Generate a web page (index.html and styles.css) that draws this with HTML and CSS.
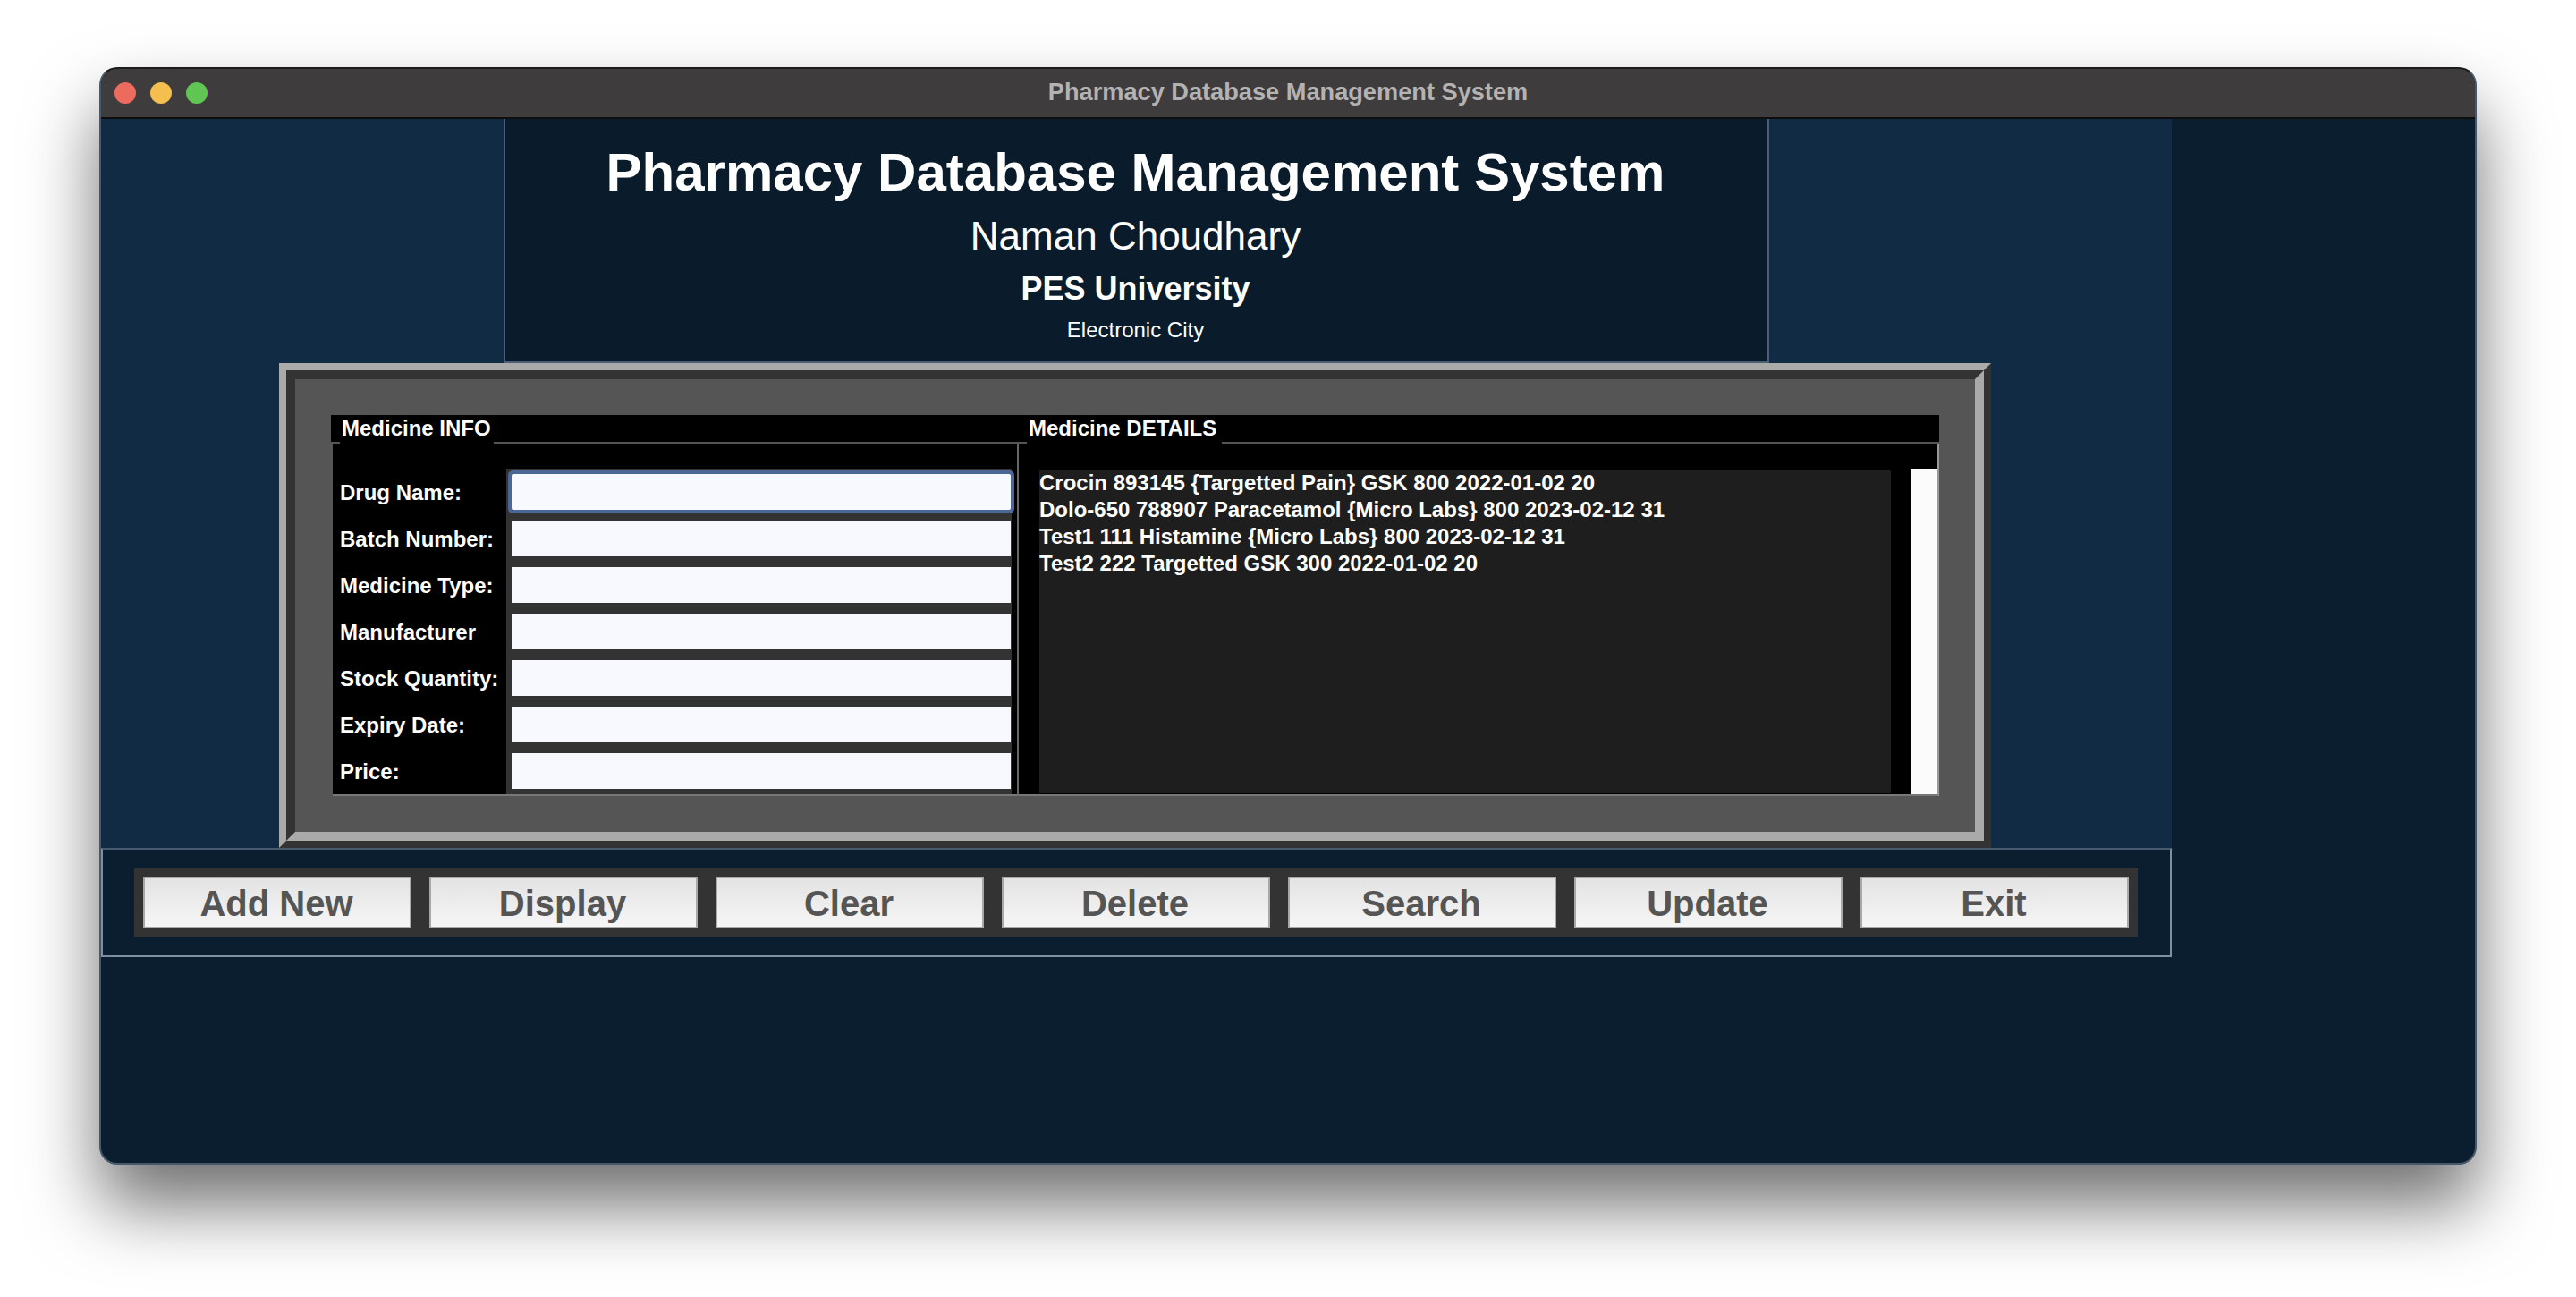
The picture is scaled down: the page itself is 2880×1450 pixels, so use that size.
FILE: index.html
```html
<!DOCTYPE html>
<html lang="en">
<head>
<meta charset="utf-8">
<title>Pharmacy Database Management System</title>
<link rel="stylesheet" href="styles.css">
</head>
<body>
<div class="window">
  <div class="titlebar">
    <div class="lights"><span class="light red"></span><span class="light yellow"></span><span class="light green"></span></div>
    <div class="wintitle">Pharmacy Database Management System</div>
  </div>
  <div class="content">
    <div class="upper">
      <header class="banner">
        <div class="b-title">Pharmacy Database Management System</div>
        <div class="b-name">Naman Choudhary</div>
        <div class="b-uni">PES University</div>
        <div class="b-city">Electronic City</div>
      </header>
      <section class="ridge">
        <div class="ridge-inner">
          <div class="frames">
            <div class="frame frame-info">
              <div class="frame-head"><span class="frame-label">Medicine INFO</span></div>
              <div class="form">
                <div class="labels">
                  <label class="lbl">Drug Name:</label>
                  <label class="lbl">Batch Number:</label>
                  <label class="lbl">Medicine Type:</label>
                  <label class="lbl">Manufacturer</label>
                  <label class="lbl">Stock Quantity:</label>
                  <label class="lbl">Expiry Date:</label>
                  <label class="lbl">Price:</label>
                </div>
                <div class="entries">
                  <div class="entry focused"></div>
                  <div class="entry"></div>
                  <div class="entry"></div>
                  <div class="entry"></div>
                  <div class="entry"></div>
                  <div class="entry"></div>
                  <div class="entry"></div>
                </div>
              </div>
            </div>
            <div class="frame frame-details">
              <div class="frame-head"><span class="frame-label">Medicine DETAILS</span></div>
              <div class="details">
                <div class="listbox">
                  <div class="row">Crocin 893145 {Targetted Pain} GSK 800 2022-01-02 20</div>
                  <div class="row">Dolo-650 788907 Paracetamol {Micro Labs} 800 2023-02-12 31</div>
                  <div class="row">Test1 111 Histamine {Micro Labs} 800 2023-02-12 31</div>
                  <div class="row">Test2 222 Targetted GSK 300 2022-01-02 20</div>
                </div>
                <div class="scrollbar"></div>
              </div>
            </div>
          </div>
        </div>
      </section>
    </div>
    <div class="actions">
      <div class="btn-frame">
        <button class="btn">Add New</button>
        <button class="btn">Display</button>
        <button class="btn">Clear</button>
        <button class="btn">Delete</button>
        <button class="btn">Search</button>
        <button class="btn">Update</button>
        <button class="btn">Exit</button>
      </div>
    </div>
  </div>
</div>
</body>
</html>
```

FILE: styles.css
```css
* { box-sizing: border-box; }
html, body { margin: 0; height: 100%; }
body {
  background: #fff;
  padding: 75px 0 0 111px;
  overflow: hidden;
  font-family: "Liberation Sans", Arial, sans-serif;
}
.window {
  width: 2658px;
  height: 1227px;
  border: 2px solid #46586a;
  border-top-color: #1c1c1c;
  border-radius: 20px;
  overflow: hidden;
  background: #0a1e2f;
  box-shadow: 0 46px 80px rgba(0, 0, 0, 0.56);
}
.titlebar {
  height: 56px;
  padding-bottom: 2px;
  background: #3e3c3c;
  border-bottom: 2px solid #0e0e0e;
  display: flex;
  align-items: center;
  justify-content: center;
  position: relative;
}
.lights {
  position: absolute;
  left: 15px;
  top: 15px;
  display: flex;
  gap: 16px;
}
.light { width: 24px; height: 24px; border-radius: 50%; }
.red { background: #ed6a5e; }
.yellow { background: #f4bf4f; }
.green { background: #61c554; }
.wintitle {
  color: #b5b2b3;
  font-size: 27.2px;
  font-weight: 700;
}
.content { width: 2315px; }
.upper { background: #122b45; height: 815px; }
.banner {
  margin-left: 450px;
  width: 1415px;
  height: 273px;
  padding: 23px 2px 0 0;
  background: #0a1c2c;
  border: 2px solid #4a5f73;
  border-top: 0;
  color: #fff;
  text-align: center;
}
.b-title { font-size: 60px; font-weight: 700; line-height: 74px; }
.b-name { font-size: 44px; line-height: 68px; }
.b-uni { font-size: 36px; font-weight: 700; line-height: 50px; }
.b-city { font-size: 24px; line-height: 42px; }
.ridge {
  margin-left: 199px;
  width: 1914px;
  height: 542px;
  border: 8px solid;
  border-color: #aaa #333 #333 #aaa;
}
.ridge-inner {
  height: 100%;
  border: 10px solid;
  border-color: #333 #aaa #aaa #333;
  background: #555;
  padding: 40px 0 0 40px;
}
.frames { display: flex; height: 426px; color: #fff; font-weight: 700; font-size: 24px; }
.frame { display: flex; flex-direction: column; }
.frame-info { width: 769px; }
.frame-details { width: 1029px; }
.frame-head {
  height: 32px;
  background: #000;
  border-bottom: 2px solid #555;
  display: flex;
}
.frame-label {
  height: 32px;
  background: #000;
  line-height: 30px;
  padding: 0 4px 0 2px;
  white-space: nowrap;
}
.frame-info .frame-label { margin-left: 10px; width: 172px; }
.frame-details .frame-label { margin-left: 9px; width: 218px; }
.form {
  height: 394px;
  margin-left: 2px;
  display: flex;
  background: #000;
  border-right: 2px solid #666;
  border-bottom: 2px solid #777;
}
.labels {
  width: 194px;
  padding: 35px 0 0 8px;
  display: flex;
  flex-direction: column;
  gap: 12px;
}
.lbl { height: 40px; line-height: 40px; white-space: nowrap; }
.entries {
  width: 565px;
  height: 364px;
  margin-top: 28px;
  padding: 6px 0 6px 6px;
  background: #333;
  display: flex;
  flex-direction: column;
  gap: 12px;
}
.entry { width: 558px; height: 40px; background: #f8f8ff; }
.focused { box-shadow: 0 0 0 4px #4a6796; border-radius: 2px; }
.details {
  height: 394px;
  display: flex;
  align-items: flex-start;
  padding: 28px 0 0 23px;
  background: #000;
  border-right: 2px solid #999;
  border-bottom: 2px solid #777;
}
.listbox {
  width: 952px;
  height: 360px;
  margin-top: 2px;
  background: #1e1e1e;
}
.row { height: 30px; line-height: 27px; white-space: nowrap; }
.scrollbar {
  width: 30px;
  height: 364px;
  margin-left: 22px;
  background: #fbfbfb;
}
.actions {
  height: 122px;
  border: 2px solid #7d8fa0;
  border-top-color: #46596d;
  padding: 20px 0 0 35px;
}
.btn-frame {
  width: 2240px;
  height: 78px;
  padding: 10px;
  background: #333;
  display: flex;
  gap: 20px;
}
.btn {
  width: 300px;
  height: 58px;
  padding: 3px 2px 0 0;
  border: 2px solid #a8a8a8;
  background: linear-gradient(#e3e3e3, #f6f6f6);
  color: #555;
  font-family: "Liberation Sans", Arial, sans-serif;
  font-size: 40px;
  font-weight: 700;
}
```
